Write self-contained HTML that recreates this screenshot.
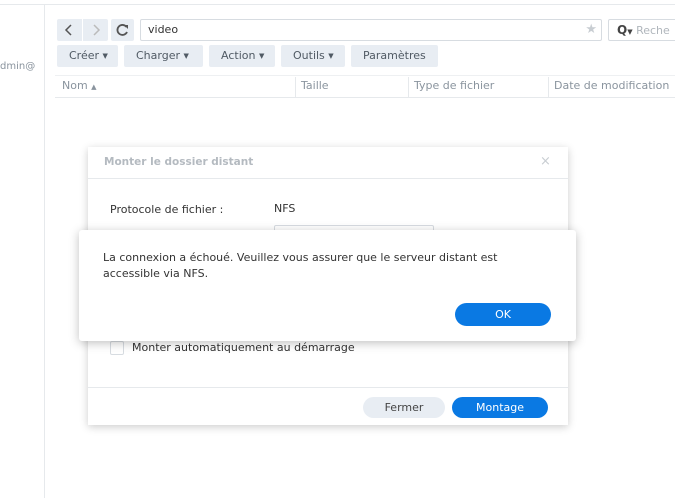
<!DOCTYPE html>
<html><head><style>
*{margin:0;padding:0;box-sizing:border-box}
body{width:675px;height:498px;background:#fff;font-family:"DejaVu Sans","Liberation Sans",sans-serif;font-size:11px;color:#414b55;position:relative;overflow:hidden}
.a{position:absolute}
.btn{position:absolute;background:#e8edf3;border-radius:2px;height:22px;line-height:22px;font-size:11px;color:#505a64;padding-left:12px}
.btn i{font-style:normal;font-size:7px;vertical-align:1px}
.col{position:absolute;top:79px;font-size:11px;color:#8a949e}
.div{position:absolute;top:77px;height:20px;width:1px;background:#e6e9ec}
</style></head><body>
<div class="a" style="left:0;top:4px;width:675px;height:1px;background:#e6e9ec"></div>
<div class="a" style="left:44px;top:4px;width:1px;height:494px;background:#e6e9ec"></div>
<div class="a" style="left:0;top:61px;font-size:10px;color:#8a949e">dmin@</div>
<div class="a" style="left:57px;top:19px;width:51px;height:22px;background:#e8edf3;border-radius:2px"></div>
<div class="a" style="left:82px;top:19px;width:1px;height:22px;background:#fff"></div>
<svg class="a" style="left:57px;top:19px" width="51" height="22"><path d="M72 0" /><path d="M14 6 L9 11 L14 16" stroke="#555" stroke-width="1.5" fill="none"/><path d="M37 6 L42 11 L37 16" stroke="#bbb" stroke-width="1.5" fill="none"/></svg>
<div class="a" style="left:111px;top:19px;width:23px;height:22px;background:#e8edf3;border-radius:2px"></div>
<svg class="a" style="left:111px;top:19px" width="23" height="22"><path d="M15.5 8 A5 5 0 1 0 16 13" stroke="#555" stroke-width="1.8" fill="none"/><path d="M13 6 L17 6 L17 10 Z" fill="#555"/></svg>
<div class="a" style="left:140px;top:19px;width:462px;height:22px;border:1px solid #d7dce1;border-radius:2px;padding-left:7px;line-height:20px;color:#333">video<span style="position:absolute;right:4px;color:#c8cdd2;font-size:13px">★</span></div>
<div class="a" style="left:608px;top:19px;width:80px;height:22px;border:1px solid #d7dce1;border-radius:2px;padding-left:8px;line-height:20px;color:#b0b6bc"><b style="color:#444;font-size:12px">Q</b><span style="font-size:7px;color:#444">▼</span> Reche</div>
<div class="btn" style="left:57px;top:45px;width:61px">Créer <i>▼</i></div>
<div class="btn" style="left:124px;top:45px;width:79px">Charger <i>▼</i></div>
<div class="btn" style="left:209px;top:45px;width:66px">Action <i>▼</i></div>
<div class="btn" style="left:281px;top:45px;width:64px">Outils <i>▼</i></div>
<div class="btn" style="left:351px;top:45px;width:87px">Paramètres</div>
<div class="a" style="left:55px;top:75px;width:620px;height:1px;background:#eef0f2"></div>
<div class="col" style="left:62px">Nom <span style="font-size:7px">▲</span></div>
<div class="div" style="left:295px"></div><div class="col" style="left:301px">Taille</div>
<div class="div" style="left:408px"></div><div class="col" style="left:414px">Type de fichier</div>
<div class="div" style="left:548px"></div><div class="col" style="left:554px">Date de modification</div>
<div class="a" style="left:55px;top:97px;width:620px;height:1px;background:#e6e9ec"></div>

<div class="a" style="left:88px;top:147px;width:480px;height:278px;background:#fff;box-shadow:0 2px 8px rgba(0,0,0,.2)">
 <div class="a" style="left:16px;top:9px;font-weight:bold;color:#b4bac0;font-size:10.5px">Monter le dossier distant</div>
 <div class="a" style="left:452px;top:7px;color:#c8cdd2;font-size:13px">×</div>
 <div class="a" style="left:0;top:31px;width:480px;height:1px;background:#e6e9ec"></div>
 <div class="a" style="left:22px;top:56px;color:#333">Protocole de fichier :</div>
 <div class="a" style="left:186px;top:55px;color:#333">NFS</div>
 <div class="a" style="left:186px;top:78px;width:160px;height:20px;border:1px solid #d7dce1;border-radius:2px"></div>
 <div class="a" style="left:22px;top:194px;width:14px;height:14px;border:1px solid #d7dce1;border-radius:2px"></div>
 <div class="a" style="left:44px;top:194px;color:#333">Monter automatiquement au démarrage</div>
 <div class="a" style="left:0;top:240px;width:480px;height:1px;background:#e6e9ec"></div>
 <div class="a" style="left:275px;top:250px;width:82px;height:21px;border-radius:11px;background:#e8edf3;text-align:center;line-height:21px;color:#444">Fermer</div>
 <div class="a" style="left:364px;top:250px;width:96px;height:21px;border-radius:11px;background:#0a79e3;text-align:center;line-height:21px;color:#fff">Montage</div>
</div>

<div class="a" style="left:79px;top:230px;width:497px;height:111px;background:#fff;border-radius:3px;box-shadow:0 2px 10px rgba(0,0,0,.25)">
 <div class="a" style="left:24px;top:20px;color:#333;line-height:16px;width:440px">La connexion a échoué. Veuillez vous assurer que le serveur distant est accessible via NFS.</div>
 <div class="a" style="left:376px;top:73px;width:96px;height:23px;border-radius:12px;background:#0a79e3;text-align:center;line-height:23px;color:#fff">OK</div>
</div>
</body></html>
